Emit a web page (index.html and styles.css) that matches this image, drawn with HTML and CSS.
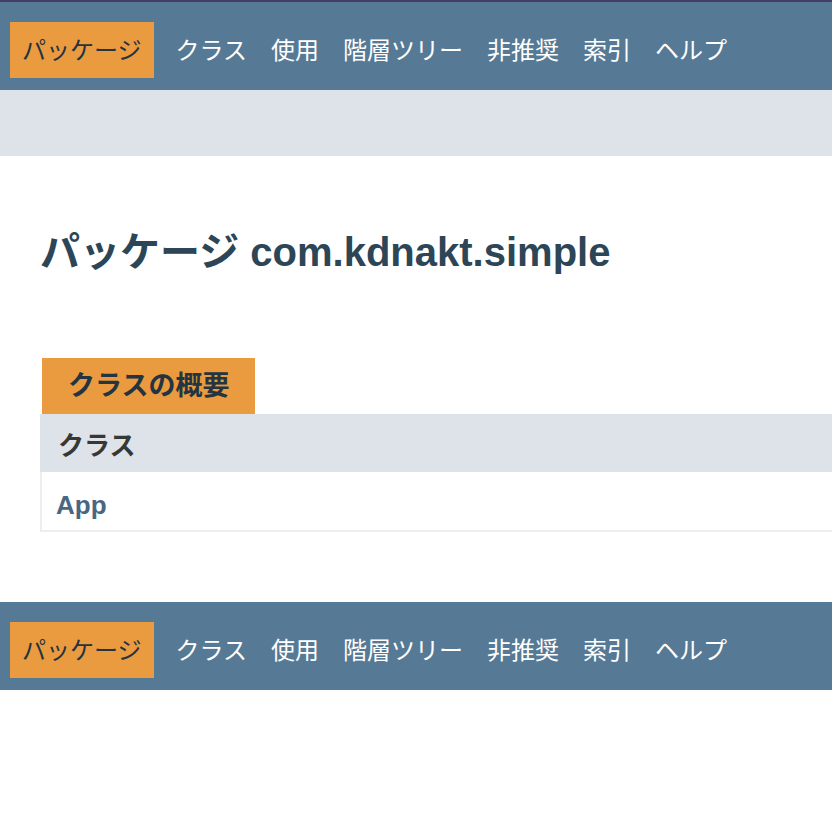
FILE: index.html
```html
<!DOCTYPE html>
<html lang="ja">
<head>
<meta charset="utf-8">
<title>com.kdnakt.simple</title>
<link rel="stylesheet" href="styles.css">
</head>
<body>
<header class="top">
  <nav class="navbar">
    <ul class="navlist">
      <li class="nav-item active">パッケージ</li>
      <li class="nav-item">クラス</li>
      <li class="nav-item">使用</li>
      <li class="nav-item">階層ツリー</li>
      <li class="nav-item">非推奨</li>
      <li class="nav-item">索引</li>
      <li class="nav-item">ヘルプ</li>
    </ul>
  </nav>
  <div class="subnav"></div>
</header>
<main class="content">
  <h1 class="title">パッケージ com.kdnakt.simple</h1>
  <section class="summary">
    <div class="caption"><span>クラスの概要</span></div>
    <div class="table">
      <div class="thead">クラス</div>
      <div class="trow"><a class="type-link" href="#">App</a></div>
    </div>
  </section>
</main>
<footer class="bottom">
  <nav class="navbar">
    <ul class="navlist">
      <li class="nav-item active">パッケージ</li>
      <li class="nav-item">クラス</li>
      <li class="nav-item">使用</li>
      <li class="nav-item">階層ツリー</li>
      <li class="nav-item">非推奨</li>
      <li class="nav-item">索引</li>
      <li class="nav-item">ヘルプ</li>
    </ul>
  </nav>
</footer>
</body>
</html>
```
FILE: styles.css
```css
html, body {
  margin: 0;
  padding: 0;
  background: #ffffff;
}
body {
  font-family: "Liberation Sans", "Noto Sans CJK JP", sans-serif;
  color: #353833;
}
.top {
  border-top: 2px solid #433d6b;
}
.navbar {
  background: #567a95;
  height: 88px;
  box-sizing: border-box;
  padding-top: 20px;
}
.navlist {
  list-style: none;
  margin: 0;
  padding: 0 0 0 10px;
  display: flex;
  align-items: flex-start;
}
.nav-item {
  font-size: 24px;
  line-height: 58px;
  height: 56px;
  color: #ffffff;
  margin-right: 24px;
  white-space: nowrap;
}
.nav-item.active {
  background: #ea9a3f;
  color: #253441;
  padding: 0 12px;
  margin-right: 22px;
}
.subnav {
  background: #dee3e9;
  height: 66px;
}
.content {
  padding: 0 0 0 40px;
}
.title {
  margin: 72px 0 0 0;
  font-size: 40px;
  line-height: 48px;
  font-weight: bold;
  color: #2c4557;
}
.summary {
  margin-top: 82px;
}
.caption {
  display: flex;
}
.caption span {
  margin-left: 2px;
  background: #ea9a3f;
  color: #253441;
  font-weight: bold;
  font-size: 27px;
  height: 56px;
  line-height: 56px;
  padding: 0 26px;
}
.table {
  border-left: 2px solid #eeeeee;
  border-bottom: 2px solid #eeeeee;
}
.thead {
  background: #dee3e9;
  height: 58px;
  line-height: 64px;
  margin-left: -2px;
  padding-left: 18px;
  font-size: 26px;
  font-weight: bold;
  color: #353833;
}
.trow {
  height: 58px;
  line-height: 66px;
  padding-left: 14px;
}
.type-link {
  font-size: 26px;
  font-weight: bold;
  color: #4a6782;
  text-decoration: none;
}
.bottom {
  margin-top: 70px;
}
```
